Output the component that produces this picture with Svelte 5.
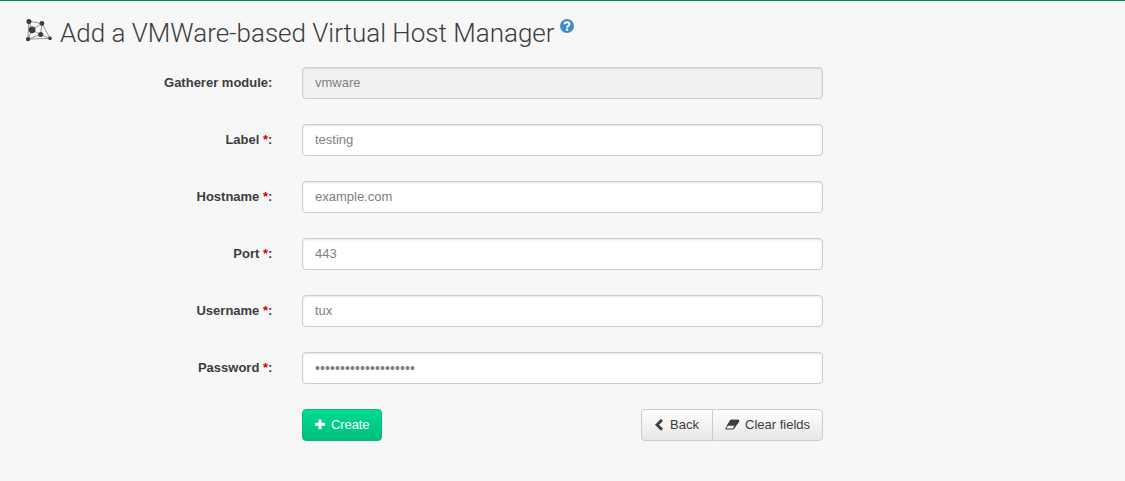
<script>
  const fields = [
    { id: 'module', label: 'Gatherer module', value: 'vmware', type: 'text', disabled: true },
    { id: 'label', label: 'Label', value: 'testing', type: 'text', required: true },
    { id: 'hostname', label: 'Hostname', value: 'example.com', type: 'text', required: true },
    { id: 'port', label: 'Port', value: '443', type: 'text', required: true },
    { id: 'username', label: 'Username', value: 'tux', type: 'text', required: true },
    { id: 'password', label: 'Password', value: '12345678901234567890', type: 'password', required: true }
  ];
</script>

<main>
  <h1>
    <svg class="network" width="28" height="26" viewBox="0 0 28 26" aria-hidden="true">
      <path d="M3.7 4.3 17 6.4 25 21.4 3 22.1ZM3.7 4.3 7 12.8 3 22.1M17 6.4 7 12.8 15.6 17.6ZM15.6 17.6 25 21.4M15.6 17.6 3 22.1" fill="none" stroke="#555" stroke-width=".6" />
      <g fill="#3d3d3d">
        <circle cx="3.9" cy="4.6" r="2.5" /><circle cx="16.9" cy="6.4" r="2.4" />
        <circle cx="7.1" cy="12.8" r="3.4" /><circle cx="15.7" cy="17.6" r="2.5" />
        <circle cx="3.1" cy="22.1" r="2.2" /><circle cx="25" cy="21.4" r="1.8" />
      </g>
    </svg>
    <span>Add a VMWare-based Virtual Host Manager</span>
    <svg class="help" width="14" height="14" viewBox="0 0 14 14" aria-hidden="true">
      <circle cx="7" cy="7" r="7" fill="#428bca" />
      <path d="M4.6 5.2C4.7 2.5 9.4 2.5 9.4 5.1 9.4 6.9 7.1 6.7 7.1 8.7" fill="none" stroke="#fff" stroke-width="2" />
      <rect x="6" y="9.6" width="2.1" height="2" fill="#fff" />
    </svg>
  </h1>

  <form>
    {#each fields as f}
      <div class="row">
        <label for={f.id}>{f.label}{#if f.required}{' '}<span class="req">*</span>{/if}:</label>
        <input id={f.id} type={f.type} value={f.value} disabled={f.disabled} />
      </div>
    {/each}
    <div class="actions">
      <button type="button" class="create">
        <svg width="12" height="12" viewBox="0 0 12 12"><path d="M4.5.4h3v3.4H11v3H7.5v3.5h-3V6.8H1v-3h3.5z" fill="#fff" /></svg>
        Create
      </button>
      <div class="group">
        <button type="button" class="back">
          <svg width="11" height="13" viewBox="0 0 11 13"><path d="M8 .9 3 5.8 8 10.7" fill="none" stroke="#3d3d3d" stroke-width="2.8" /></svg>
          Back
        </button>
        <button type="button" class="clear">
          <svg width="15" height="12" viewBox="0 0 15 12"><path d="M5.6 1.1h8.2L8.6 10H.6Z" fill="#f2f2f2" stroke="#3d3d3d" stroke-width="1" stroke-linejoin="round" /><path d="M5.5 1h8.6v1.3L10.4 6.7H1.9Z" fill="#3d3d3d" /><path d="M14 1.5V3L8.5 10V8Z" fill="#3d3d3d" /></svg>
          Clear fields
        </button>
      </div>
    </div>
  </form>
</main>

<style>
  :global(body) { background: #f7f7f7; }
  main {
    box-sizing: border-box;
    height: 481px;
    border-top: 1px solid #00875a;
    font: 13px/20px "Liberation Sans", Arial, sans-serif;
    color: #3d3d3d;
    overflow: hidden;
  }
  h1 {
    display: flex;
    align-items: flex-start;
    margin: 0;
    padding: 16px 0 0 25px;
    height: 50px;
    box-sizing: content-box;
    font: 300 26px/32px Roboto, sans-serif;
    white-space: nowrap;
  }
  .network { margin-right: 7px; }
  .help { margin: 2px 0 0 5px; }
  .row { display: flex; height: 32px; margin-bottom: 25px; }
  form { margin-top: -1px; padding-top: 1px; }
  label { width: 272.4px; margin-right: 29.6px; text-align: right; font-weight: bold; line-height: 32px; }
  .req { color: #d40000; }
  input {
    box-sizing: border-box;
    width: 521px;
    height: 32px;
    padding: 5px 12px 6px;
    border: 1px solid #ccc;
    border-radius: 4px;
    background: #fff;
    color: #808080;
    font: 13px/20px "Liberation Sans", Arial, sans-serif;
    box-shadow: inset 0 1px 2px rgba(0, 0, 0, .1);
  }
  input[type="password"] { font-size: 14px; letter-spacing: .1px; }
  input:disabled { background: #f1f1f1; }
  .actions { display: flex; justify-content: space-between; width: 521px; margin-left: 302px; }
  .group { display: flex; }
  button {
    display: flex;
    align-items: center;
    box-sizing: border-box;
    height: 32px;
    margin: 0;
    padding: 0 12px;
    border: 1px solid #ccc;
    border-radius: 4px;
    background: linear-gradient(#fff, #e6e6e6);
    color: #3d3d3d;
    font: 13px/20px "Liberation Sans", Arial, sans-serif;
    white-space: nowrap;
  }
  .create {
    width: 80px;
    padding: 0 0 0 11px;
    border-color: #00bd7d;
    background: linear-gradient(#00dc91, #00bf7e);
    color: #fff;
    letter-spacing: -.1px;
  }
  .create svg { margin-right: 5px; }
  .back { width: 71px; padding-right: 0; border-right: 0; border-radius: 4px 0 0 4px; }
  .back svg { margin-right: 5px; }
  .clear { width: 111px; padding: 0 0 0 12px; border-radius: 0 4px 4px 0; }
  .clear svg { margin-right: 5px; }
</style>
